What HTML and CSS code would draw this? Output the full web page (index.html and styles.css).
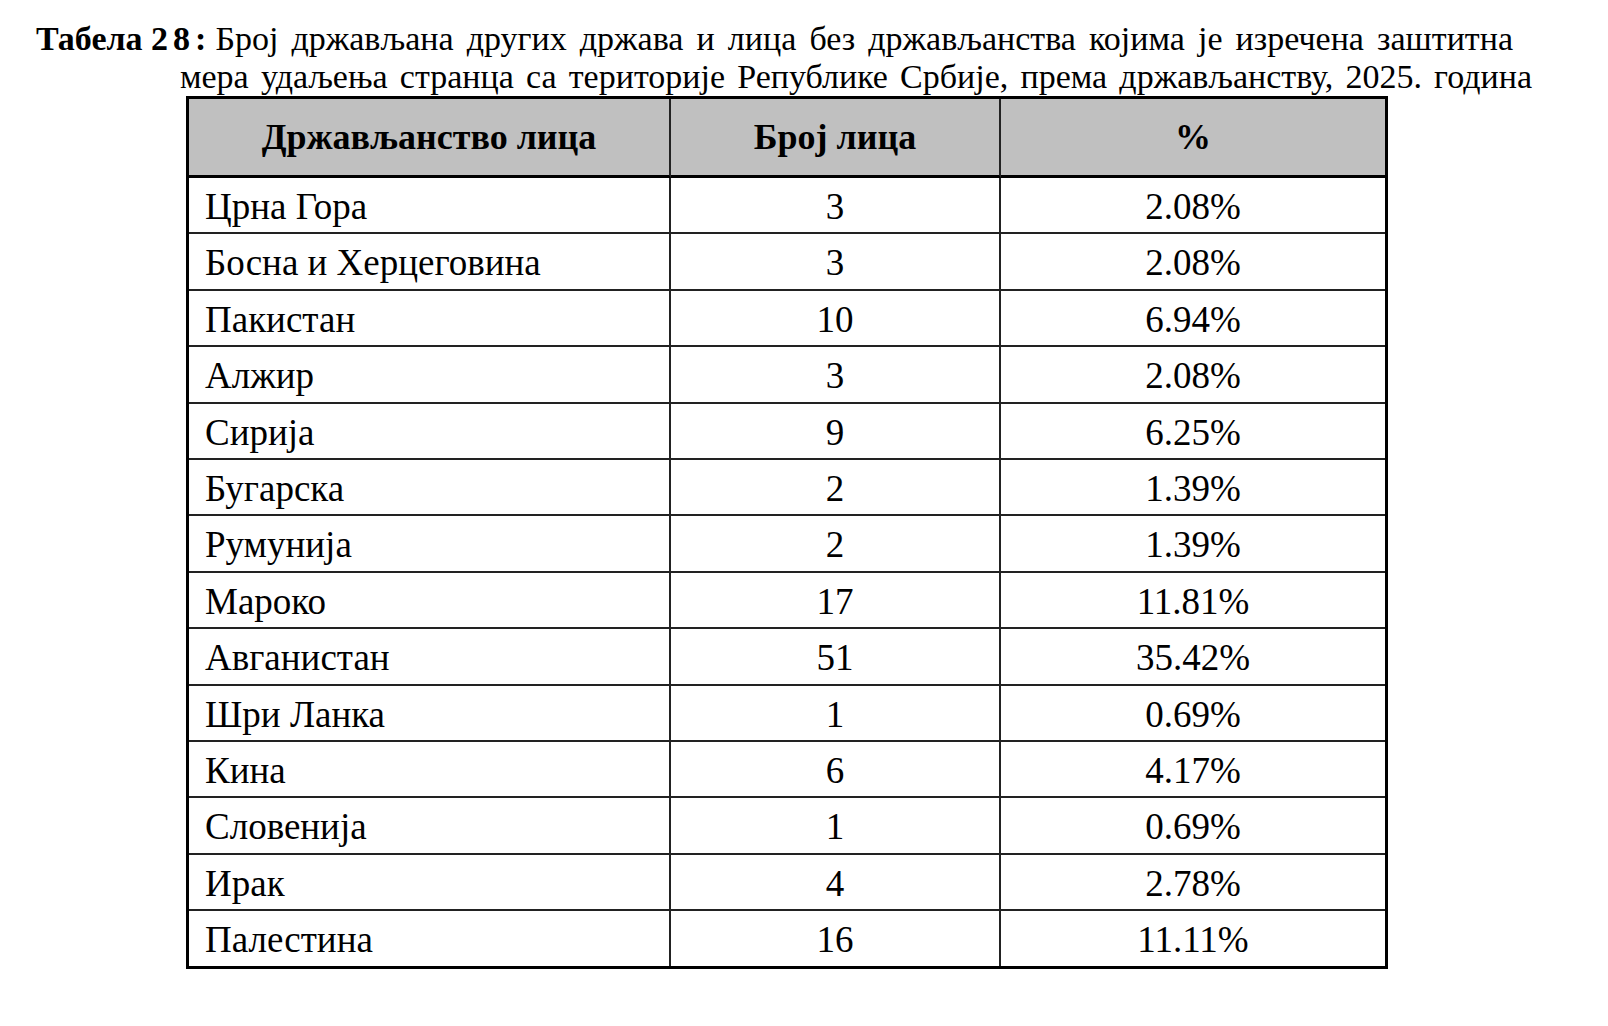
FILE: index.html
```html
<!DOCTYPE html>
<html lang="sr">
<head>
<meta charset="utf-8">
<title>Табела 28</title>
<link rel="stylesheet" href="styles.css">
</head>
<body>
<div class="caption">
  <div class="line1"><span class="label">Табела <span class="num">28:</span></span>Број држављана других држава и лица без држављанства којима је изречена заштитна</div>
  <div class="line2">мера удаљења странца са територије Републике Србије, према држављанству, 2025. година</div>
</div>
<table class="data">
  <thead>
    <tr><th class="c1">Држављанство лица</th><th class="c2">Број лица</th><th class="c3">%</th></tr>
  </thead>
  <tbody>
    <tr><td class="name">Црна Гора</td><td>3</td><td>2.08%</td></tr>
    <tr><td class="name">Босна и Херцеговина</td><td>3</td><td>2.08%</td></tr>
    <tr><td class="name">Пакистан</td><td>10</td><td>6.94%</td></tr>
    <tr><td class="name">Алжир</td><td>3</td><td>2.08%</td></tr>
    <tr><td class="name">Сирија</td><td>9</td><td>6.25%</td></tr>
    <tr><td class="name">Бугарска</td><td>2</td><td>1.39%</td></tr>
    <tr><td class="name">Румунија</td><td>2</td><td>1.39%</td></tr>
    <tr><td class="name">Мароко</td><td>17</td><td>11.81%</td></tr>
    <tr><td class="name">Авганистан</td><td>51</td><td>35.42%</td></tr>
    <tr><td class="name">Шри Ланка</td><td>1</td><td>0.69%</td></tr>
    <tr><td class="name">Кина</td><td>6</td><td>4.17%</td></tr>
    <tr><td class="name">Словенија</td><td>1</td><td>0.69%</td></tr>
    <tr><td class="name">Ирак</td><td>4</td><td>2.78%</td></tr>
    <tr><td class="name">Палестина</td><td>16</td><td>11.11%</td></tr>
  </tbody>
</table>
</body>
</html>
```

FILE: styles.css
```css
html, body {
  margin: 0;
  padding: 0;
  background: #ffffff;
}

body {
  font-family: "Liberation Serif", "Times New Roman", serif;
  color: #000000;
}

.caption {
  padding-top: 20px;
  font-size: 34px;
  line-height: 38px;
}

.line1 {
  margin-left: 36px;
  width: 1477px;
  text-align: justify;
  text-align-last: justify;
  white-space: nowrap;
}

.label {
  display: inline-block;
  font-weight: bold;
  margin-right: 4px;
}

.num {
  letter-spacing: 5px;
}

.line2 {
  margin-left: 180px;
  width: 1352px;
  text-align: justify;
  text-align-last: justify;
  white-space: nowrap;
}

.data {
  margin-left: 186px;
  border-collapse: separate;
  border-spacing: 0;
  border: 3px solid #000000;
  width: 1202px;
  table-layout: fixed;
}

.data th,
.data td {
  padding: 0;
  border-right: 2px solid #222222;
  border-bottom: 2px solid #222222;
  text-align: center;
  white-space: nowrap;
}

.data th:last-child,
.data td:last-child {
  border-right: none;
}

.data tbody tr:last-child td {
  border-bottom: none;
}

.data th {
  background: #c0c0c0;
  font-size: 36px;
  font-weight: bold;
  height: 76px;
  line-height: 76px;
  border-bottom: 3px solid #000000;
}

.data th.c1 { width: 480px; }
.data th.c2 { width: 328px; }
.data th.c3 { width: 384px; }

.data td {
  font-size: 37px;
  height: 51.4px;
  line-height: 51.4px;
  padding-top: 3px;
}

.data td.name {
  text-align: left;
  padding-left: 16px;
}
```
